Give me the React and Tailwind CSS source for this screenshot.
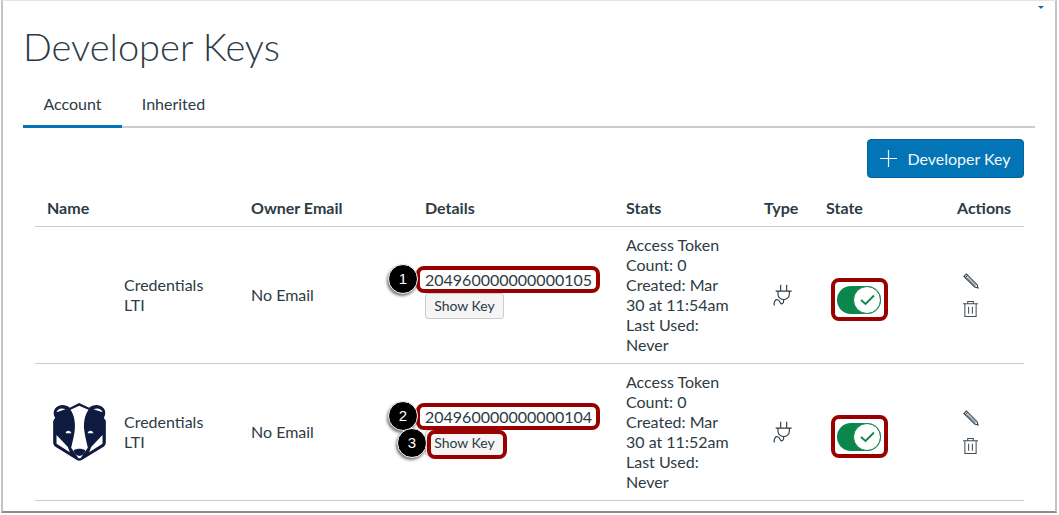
const Ring = ({ className }) => (
  <span className={`absolute border-4 border-[#990000] rounded-lg pointer-events-none ${className}`} />
);

const Badge = ({ n, className }) => (
  <span
    className={`absolute w-[30px] h-[30px] rounded-full bg-black text-white text-[15px] flex items-center justify-center shadow-[-1px_2px_3px_rgba(0,0,0,0.55)] border border-white font-['Liberation_Sans',sans-serif] ${className}`}
  >
    {n}
  </span>
);

const Badger = () => (
  <svg width="53" height="58" viewBox="70 38 158 174" className="block">
    <path d="M148 38 L178 52 C190 42 208 40 220 52 C228 60 228 72 222 82 L228 92 V155 C228 162 226 166 220 170 L156 209 C151 212 146 212 141 209 L78 170 C72 166 70 162 70 155 V92 L76 82 C70 72 70 60 78 52 C90 40 108 42 120 52 Z" fill="#0e1a3f" />
    <path d="M80 66 C84 54 96 52 107 57 Z" fill="#fff" />
    <path d="M218 66 C214 54 202 52 191 57 Z" fill="#fff" />
    <path d="M148 46 L122 58 C134 75 138 100 134 125 C132 140 128 155 124 172 L146 204 L152 204 L174 172 C170 155 166 140 164 125 C160 100 164 75 176 58 Z" fill="#fff" />
    <path d="M80 134 L114 170 L120 186 L80 160 Z" fill="#fff" />
    <path d="M218 134 L184 170 L178 186 L218 160 Z" fill="#fff" />
    <path d="M107 129 C110 119 120 119 125 129 Z" fill="#fff" />
    <path d="M173 129 C177 119 187 119 191 129 Z" fill="#fff" />
    <path d="M132 180 C140 174 158 174 166 180 C166 190 156 197 149 197 C142 197 132 190 132 180 Z" fill="#0e1a3f" />
  </svg>
);

const Plug = () => (
  <svg width="20" height="23" viewBox="70 70 60 68" fill="none" stroke="#2d3b45" strokeWidth="3.4" className="block">
    <path d="M93 72 V90 M111 72 V90 M78 91 H126 M85 91 V100 C85 110 94 116 102 116 C110 116 119 110 119 100 V91 M102 116 V120 C102 128 96 132 92 126 C88 116 80 114 76 120 C73 124 73 130 74 134" />
  </svg>
);

const Pencil = () => (
  <svg width="16" height="16" viewBox="0 0 17 17" fill="none" stroke="#2d3b45" strokeWidth="1.1" className="block">
    <path d="M1 3.6 L3.6 1 L15 12.4 L16 16 L12.4 15 Z" />
    <path d="M2.6 5 L5 2.6" />
    <path d="M4.4 5.2 L13.2 14 M5.8 3.8 L14.4 12.6" stroke="#6b7983" />
  </svg>
);

const Trash = () => (
  <svg width="15" height="18" viewBox="0 0 16 18" fill="none" stroke="#3f4e59" strokeWidth="1.1" className="block">
    <path d="M0 3.5 H16 M5 3.5 V1 H11 V3.5 M2 3.5 V17 H14 V3.5 M6 6.5 V14 M10 6.5 V14" />
  </svg>
);

const Toggle = () => (
  <span className="flex w-[44px] h-[28px] rounded-full bg-[#0b874b] items-center justify-end">
    <span className="flex w-[28px] h-[28px] rounded-full bg-white border border-[#0b874b] items-center justify-center">
      <svg width="15" height="12" viewBox="0 0 15 12" fill="none" stroke="#0b874b" strokeWidth="1.8">
        <path d="M1 6 L5.5 10 L14 1.5" />
      </svg>
    </span>
  </span>
);

const Row = ({ logo, id, badgeN, callShow }) => (
  <div className="grid grid-cols-[204px_174px_201px_138px_62px_131px_78px] h-[137px] border-b border-[#c7cdd1] items-center">
    <div className="flex items-center h-full pl-[18px]">
      <div className="w-[53px] shrink-0">{logo && <Badger />}</div>
      <div className="ml-[18px] leading-5">Credentials<br />LTI</div>
    </div>
    <div className="pl-3">No Email</div>
    <div className="pl-3 flex flex-col items-start">
      <span className="relative leading-5 mb-[3px] -mt-px">
        {id}
        <Ring className="-left-[9px] -right-[8px] -top-[4px] -bottom-[3px]" />
        <Badge n={badgeN} className="-left-[37px] -top-[6px]" />
      </span>
      <span className="relative">
        <span className="flex items-center h-[26px] w-[79px] justify-center pb-px bg-[#f5f5f5] border border-[#c7cdd1] rounded-[3px] text-sm">
          Show Key
        </span>
        {callShow && (
          <>
            <Ring className="left-[2px] -right-[3px] top-0 -bottom-[3px]" />
            <Badge n={3} className="-left-[28px] -top-[2px]" />
          </>
        )}
      </span>
    </div>
    <div className="pl-3 leading-5 pr-4">
      Access Token<br />Count: 0<br />Created: Mar<br />30 at {id.endsWith("5") ? "11:54am" : "11:52am"}<br />Last Used:<br />Never
    </div>
    <div className="pl-[21px]"><Plug /></div>
    <div className="pl-[23px] mt-[10px]">
      <span className="relative inline-flex align-middle">
        <Toggle />
        <Ring className="-left-[6px] -right-[7px] -top-[8px] -bottom-[7px]" />
      </span>
    </div>
    <div className="pl-[18px] flex flex-col gap-[11px]">
      <Pencil />
      <Trash />
    </div>
  </div>
);

export default function App() {
  return (
    <div className="w-[1059px] h-[515px] bg-white overflow-hidden font-['Lato','Noto_Sans',sans-serif] text-base text-[#2d3b45]">
      <div className="relative ml-px mt-0 w-[1056px] h-[513px] border-l-2 border-t border-r-2 border-b-2 border-t-[#e4e4e4] border-l-[#c4c4c4] border-r-[#c4c4c4] border-b-[#8c8c8c]">
        <span className="absolute top-[5px] right-[11px] w-0 h-0 border-x-[3px] border-x-transparent border-t-[3px] border-t-[#0374b5]" />
        <h1 className="ml-[20px] mt-[22px] text-[38px] leading-[46px] font-light">Developer Keys</h1>
        <div className="ml-[20px] mr-[20px] mt-[15px] flex border-b-2 border-[#c7cdd1] h-[44px]">
          <div className="w-[99px] h-[44px] flex items-center justify-center pb-[1px] border-b-[3px] border-[#0374b5]">Account</div>
          <div className="w-[103px] h-[39px] flex items-center justify-center">Inherited</div>
        </div>
        <div className="flex justify-end mr-[31px] mt-[11px]">
          <button className="flex items-center justify-center gap-[10px] w-[157px] h-[39px] rounded-[4px] bg-[#0374b5] border border-[#0063a0] text-[#f2f8fc]">
            <svg width="17" height="17" viewBox="0 0 17 17" stroke="currentColor" strokeWidth="1.2">
              <path d="M8.5 0 V17 M0 8.5 H17" />
            </svg>
            Developer Key
          </button>
        </div>
        <div className="ml-[32px] mr-[31px] mt-[11px]">
          <div className="grid grid-cols-[204px_174px_201px_138px_62px_131px_78px] h-[38px] border-b border-[#c7cdd1] items-center font-bold text-[#2d3b45]">
            <div className="pl-3">Name</div>
            <div className="pl-3">Owner Email</div>
            <div className="pl-3">Details</div>
            <div className="pl-3">Stats</div>
            <div className="pl-3">Type</div>
            <div className="pl-3">State</div>
            <div className="pl-3">Actions</div>
          </div>
          <Row id="204960000000000105" badgeN={1} />
          <Row id="204960000000000104" badgeN={2} logo callShow />
        </div>
      </div>
    </div>
  );
}
